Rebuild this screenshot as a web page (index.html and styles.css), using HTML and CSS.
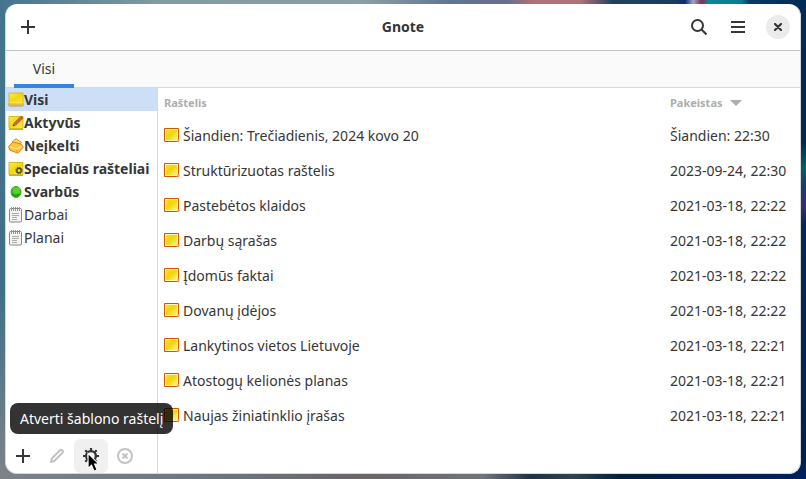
FILE: index.html
```html
<!DOCTYPE html>
<html lang="lt">
<head>
<meta charset="utf-8">
<title>Gnote</title>
<link rel="stylesheet" href="styles.css">
</head>
<body>
<svg class="defs" aria-hidden="true">
  <defs>
    <linearGradient id="yellow" x1="0" y1="0" x2="1" y2="1"><stop offset="0" stop-color="#fbef5a"/><stop offset=".45" stop-color="#f0d80c"/><stop offset="1" stop-color="#fbe95c"/></linearGradient>
    <linearGradient id="gold" x1="0" y1="0" x2="1" y2="1"><stop offset="0" stop-color="#f2e02a"/><stop offset=".45" stop-color="#efd60c"/><stop offset="1" stop-color="#fff08c"/></linearGradient>
    <symbol id="note" viewBox="0 0 16 16"><path d="M.5 1.500h14v13H.5z" fill="#fff6b0" stroke="#d45500"/><path d="M2 3h11v10H2z" fill="url(#gold)"/><path d="M13 14.500c.8-.8 1-1.500.8-2.500l1.700 1c0 .8-1 1.500-2.500 1.500z" fill="#f9a04a" stroke="#f0a060" stroke-width=".6"/></symbol>
    <symbol id="all" viewBox="0 0 16 16"><path d="M1 14.500h14l.5-2H.5z" fill="#a99a68"/><path d="M1 1h14v9.500l.5 3H.5l.5-3z" fill="url(#yellow)" stroke="#d9b520"/><path d="M1 11.500h14l.3 2H.7z" fill="#efb63c"/><path d="M1.500 10.500h13" stroke="#fbe84a"/></symbol>
    <symbol id="active" viewBox="0 0 16 16"><path d="M1 1.500h14v12H1z" fill="url(#yellow)" stroke="#d9b520"/><path d="M1 14.500h14" stroke="#b9a870"/><path d="M5 11l1-3 6.500-6.200 2 2L8 10z" fill="#c8702c" stroke="#8d5a2c" stroke-width=".6"/><path d="M12 2.200l1.500-1.500 2 2L14 4.200z" fill="#e05050"/><path d="M5 11l.5-1.600 1.200 1z" fill="#333"/></symbol>
    <symbol id="unfiled" viewBox="0 0 16 16"><path d="M4.500 3.500L8 .8l5.500 3.700L10 9z" fill="#ffe665" stroke="#e8821e"/><path d="M.7 8.500L5 4l8 2 2.300 3-5.500 6.200L1.500 12z" fill="#fcc83a" stroke="#e8781e"/><path d="M2 8.800l7 2.200 5-3" fill="none" stroke="#fff0a0"/><path d="M9 11.500v3" stroke="#f0902c"/></symbol>
    <symbol id="special" viewBox="0 0 16 16"><path d="M1 1.500h14v12H1z" fill="url(#yellow)" stroke="#d9b520"/><path d="M1 14.500h14" stroke="#b9a870"/><circle cx="11" cy="9.500" r="2.200" fill="none" stroke="#4a4622" stroke-width="1.400"/><circle cx="11" cy="9.500" r="3.200" fill="none" stroke="#4a4622" stroke-dasharray="1.250 1.260"/></symbol>
    <symbol id="important" viewBox="0 0 16 16"><ellipse cx="8" cy="8" rx="5" ry="5.500" fill="#35bd16" stroke="#229808" stroke-width=".8"/><ellipse cx="8.500" cy="6.500" rx="3.600" ry="3.300" fill="#5cd033"/><path d="M4 10.500q3.500 3 7.500 0" fill="none" stroke="#188308"/></symbol>
    <symbol id="notebook" viewBox="0 0 16 16"><rect x="1.500" y="1.500" width="12" height="13.500" rx="1" fill="#f3f4f1" stroke="#888a85"/><path d="M4 6.500h7M4 8.500h7M4 10.500h5M4 12.500h5" stroke="#aaaea8"/><path d="M3.500 0v4M5.500 0v4M7.500 0v4M9.500 0v4M11.500 0v4" stroke="#65bd31"/></symbol>
    <symbol id="plus" viewBox="0 0 16 16"><path d="M8 1v14M1 8h14" stroke="currentColor" stroke-width="2" fill="none"/></symbol>
  </defs>
</svg>
<main class="window">
  <header class="titlebar">
    <button class="icon-button" aria-label="Naujas raštelis"><svg class="icon"><use href="#plus"/></svg></button>
    <h1>Gnote</h1>
    <div class="actions">
      <button class="icon-button" aria-label="Ieškoti"><svg class="icon" viewBox="0 0 16 16" fill="none" stroke="currentColor" stroke-width="2"><circle cx="6.500" cy="6.500" r="5.500"/><path d="M10.500 10.500l5 5"/></svg></button>
      <button class="icon-button" aria-label="Meniu"><svg class="icon" viewBox="0 0 16 16" stroke="currentColor" stroke-width="2"><path d="M1 3h14M1 8h14M1 13h14"/></svg></button>
      <button class="close" aria-label="Užverti"><svg viewBox="0 0 8 8" stroke="currentColor" stroke-width="2.200" stroke-linecap="round"><path d="M1 1l6 6M7 1L1 7"/></svg></button>
    </div>
  </header>
  <nav class="tabs"><button class="tab">Visi</button></nav>
  <div class="body">
    <aside class="sidebar">
      <ul class="notebooks">
        <li class="selected"><svg class="icon"><use href="#all"/></svg><b>Visi</b></li>
        <li><svg class="icon"><use href="#active"/></svg><b>Aktyvūs</b></li>
        <li><svg class="icon"><use href="#unfiled"/></svg><b>Neįkelti</b></li>
        <li><svg class="icon"><use href="#special"/></svg><b>Specialūs rašteliai</b></li>
        <li><svg class="icon"><use href="#important"/></svg><b>Svarbūs</b></li>
        <li><svg class="icon"><use href="#notebook"/></svg>Darbai</li>
        <li><svg class="icon"><use href="#notebook"/></svg>Planai</li>
      </ul>
      <div class="toolbar">
        <button class="tool" aria-label="Pridėti"><svg class="icon"><use href="#plus"/></svg></button>
        <button class="tool" aria-label="Pervadinti" disabled><svg class="icon" viewBox="0 0 16 16" fill="none" stroke="currentColor" stroke-width="2" stroke-linejoin="round"><path d="M2 14l.8-3.500L11 2.300q1.200-1 2.300 0t.2 2.500L5.300 13z"/></svg></button>
        <button class="tool hover" aria-label="Atverti šablono raštelį" aria-describedby="tip"><svg class="icon" viewBox="0 0 16 16" fill="none" stroke="currentColor"><circle cx="8" cy="8" r="4.900" stroke-width="2.400"/><path d="M8 0v3M8 13v3M0 8h3M13 8h3M2.300 2.300l2.200 2.200M11.500 11.500l2.200 2.200M13.700 2.300l-2.200 2.200M4.500 11.500l-2.200 2.200" stroke-width="2.200"/></svg>
          <svg class="cursor" viewBox="0 0 12 19"><path d="M1 1v14l3.200-3 2.300 5.500 2.800-1.200L7 11h4z" fill="#000" stroke="#fff"/></svg></button>
        <button class="tool" aria-label="Pašalinti" disabled><svg class="icon" viewBox="0 0 16 16" fill="none" stroke="currentColor" stroke-width="2"><circle cx="8" cy="8" r="7"/><path d="M5.500 5.500l5 5M10.500 5.500l-5 5"/></svg></button>
        <div class="tooltip" id="tip" role="tooltip">Atverti šablono raštelį</div>
      </div>
    </aside>
    <table class="notes">
      <thead><tr><th>Raštelis</th><th class="date">Pakeistas<svg class="arrow" viewBox="0 0 12 6"><path d="M0 0h12L6 6z" fill="currentColor"/></svg></th></tr></thead>
      <tbody>
        <tr><td><svg class="icon"><use href="#note"/></svg>Šiandien: Trečiadienis, 2024 kovo 20</td><td>Šiandien: 22:30</td></tr>
        <tr><td><svg class="icon"><use href="#note"/></svg>Struktūrizuotas raštelis</td><td>2023-09-24, 22:30</td></tr>
        <tr><td><svg class="icon"><use href="#note"/></svg>Pastebėtos klaidos</td><td>2021-03-18, 22:22</td></tr>
        <tr><td><svg class="icon"><use href="#note"/></svg>Darbų sąrašas</td><td>2021-03-18, 22:22</td></tr>
        <tr><td><svg class="icon"><use href="#note"/></svg>Įdomūs faktai</td><td>2021-03-18, 22:22</td></tr>
        <tr><td><svg class="icon"><use href="#note"/></svg>Dovanų įdėjos</td><td>2021-03-18, 22:22</td></tr>
        <tr><td><svg class="icon"><use href="#note"/></svg>Lankytinos vietos Lietuvoje</td><td>2021-03-18, 22:21</td></tr>
        <tr><td><svg class="icon"><use href="#note"/></svg>Atostogų kelionės planas</td><td>2021-03-18, 22:21</td></tr>
        <tr><td><svg class="icon"><use href="#note"/></svg>Naujas žiniatinklio įrašas</td><td>2021-03-18, 22:21</td></tr>
      </tbody>
    </table>
  </div>
</main>
</body>
</html>
```
FILE: styles.css
```css
* { box-sizing: border-box; }
body {
  margin: 0;
  min-height: 100vh;
  padding: 4px 5px 5px;
  display: flex;
  font: 14px/20px "Noto Sans", sans-serif;
  color: #363636;
  background:
    linear-gradient(90deg, #44758c, #839ba3 20%, #8a9fa6 45%, #5f7591 56%, #6a6f8c 63%, #b07078 66%, #b07078 72%, #24425f 76%, #1c3a5c 84%, #0a2a80 85%, #a0a8c0 86%, #80305a 87%, #0a8a98 88%, #0a7a90 92%, #063a66 93%, #002a58) top / 100% 12px no-repeat,
    linear-gradient(90deg, #7d8289, #6b7880 25%, #6a6468 45%, #6f757a 60%, #1d3048 66%, #2f4452 71%, #00203f 77%, #00225c) bottom / 100% 14px no-repeat,
    linear-gradient(#002a58, #002a52 30%, #00606a 35%, #1a3a70 39%, #35306e 43%, #002a5a 47%, #00204f) right / 8px 100% no-repeat,
    linear-gradient(#44758c, #3f7088 60%, #7d8289);
}
.defs { position: absolute; width: 0; height: 0; }
button { border: 0; padding: 0; font: inherit; color: inherit; background: none; }
.icon { width: 16px; height: 16px; flex: none; }
.window {
  flex: 1;
  display: flex;
  flex-direction: column;
  background: #fff;
  border: solid #d5d8da;
  border-width: 0 1px 1px;
  border-radius: 12px;
}
.titlebar {
  height: 47px;
  padding: 0 5px;
  display: grid;
  grid-template-columns: 1fr auto 1fr;
  align-items: center;
  border-bottom: 1px solid #c3c3c3;
}
h1 { margin: 0; font-size: 14px; line-height: 20px; }
.icon-button { width: 34px; height: 34px; display: grid; place-items: center; }
.actions { margin-right: 5px; display: flex; justify-content: flex-end; align-items: center; gap: 5px; }
.close {
  width: 24px;
  height: 24px;
  margin-left: 6px;
  display: grid;
  place-items: center;
  border-radius: 50%;
  background: #ebebeb;
}
.close svg { width: 8px; height: 8px; }
.tabs { height: 37px; padding-left: 8px; display: flex; background: #fafafa; border-bottom: 1px solid #d8d8d8; }
.tab { width: 60px; height: 37px; padding-top: 2px; border-bottom: 4px solid #3584e4; }
.body { flex: 1; display: flex; }
.sidebar { width: 152px; display: flex; flex-direction: column; justify-content: space-between; border-right: 1px solid #d8d8d8; }
.notebooks { margin: 0; padding: 0; list-style: none; white-space: nowrap; }
.notebooks li { height: 23px; padding-left: 2px; display: flex; align-items: center; }
.selected { background: #cddff7; }
.toolbar { position: relative; display: flex; }
.tool { position: relative; width: 34px; height: 34px; display: grid; place-items: center; border-radius: 6px; }
.tool:disabled { color: #c3c3c3; }
.hover { background: #f0f0f0; }
.cursor { position: absolute; left: 13px; top: 13px; width: 13px; height: 21px; }
.tooltip {
  position: absolute;
  left: 4px;
  bottom: 39px;
  padding: 6px 10px 5px;
  white-space: nowrap;
  color: #fff;
  background: rgba(0, 0, 0, .8);
  border-radius: 8px;
}
.notes { flex: 1; align-self: flex-start; border-collapse: collapse; }
.notes th { height: 30px; padding: 0 6px; text-align: left; font-size: 11px; color: #adadad; }
.notes td { height: 35px; padding: 0 6px; white-space: nowrap; }
.notes td .icon { margin-right: 3px; vertical-align: -2px; }
.notes .date { width: 136px; }
.arrow { width: 12px; height: 6px; margin-left: 7px; vertical-align: 1px; }
```
